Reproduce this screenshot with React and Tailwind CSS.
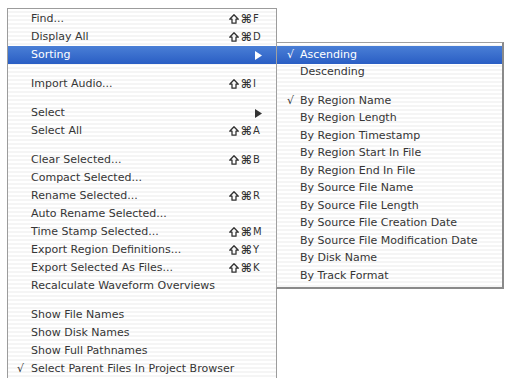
import React from "react";

const stripes =
  "bg-[repeating-linear-gradient(to_bottom,#ffffff_0px,#ffffff_2px,#f5f5f5_2px,#f5f5f5_4px)]";

const mainItems = [
  { t: "Find...", k: "F" },
  { t: "Display All", k: "D" },
  { t: "Sorting", sub: true, hl: true },
  { sep: true },
  { t: "Import Audio...", k: "I" },
  { sep: true },
  { t: "Select", sub: true },
  { t: "Select All", k: "A" },
  { sep: true },
  { t: "Clear Selected...", k: "B" },
  { t: "Compact Selected..." },
  { t: "Rename Selected...", k: "R" },
  { t: "Auto Rename Selected..." },
  { t: "Time Stamp Selected...", k: "M" },
  { t: "Export Region Definitions...", k: "Y" },
  { t: "Export Selected As Files...", k: "K" },
  { t: "Recalculate Waveform Overviews" },
  { sep: true },
  { t: "Show File Names" },
  { t: "Show Disk Names" },
  { t: "Show Full Pathnames" },
  { t: "Select Parent Files In Project Browser", check: true },
];

const subItems = [
  { t: "Ascending", check: true, hl: true },
  { t: "Descending" },
  { sep: true },
  { t: "By Region Name", check: true },
  { t: "By Region Length" },
  { t: "By Region Timestamp" },
  { t: "By Region Start In File" },
  { t: "By Region End In File" },
  { t: "By Source File Name" },
  { t: "By Source File Length" },
  { t: "By Source File Creation Date" },
  { t: "By Source File Modification Date" },
  { t: "By Disk Name" },
  { t: "By Track Format" },
];

function ShiftIcon() {
  return (
    <svg width="10" height="10" viewBox="0 0 10 10" className="mr-[2px]">
      <path
        d="M5 0.8 L9.3 5.2 L7 5.2 L7 9.2 L3 9.2 L3 5.2 L0.7 5.2 Z"
        fill="none"
        stroke="#333333"
        strokeWidth="1.3"
        strokeLinejoin="round"
      />
    </svg>
  );
}

function MainRow({ it }) {
  if (it.sep) return <div className="h-[11px]" />;
  const hl = it.hl;
  return (
    <div
      className={
        "flex h-[18px] items-center pl-[9px] pr-[13px] text-[11px] " +
        (hl
          ? "bg-[linear-gradient(to_bottom,#4a7fd6,#2a5ec4)] text-white"
          : "text-[#363636]")
      }
    >
      <span className="w-[14px] shrink-0 text-[11px]">{it.check ? "√" : ""}</span>
      <span className="flex-1 whitespace-nowrap">{it.t}</span>
      {it.k && (
        <span className="flex items-center text-[#333]">
          <ShiftIcon />
          <span className="text-[12px] font-bold leading-none">⌘</span>
          <span className="ml-[1px] w-[10px] text-[10px] leading-none">{it.k}</span>
        </span>
      )}
      {it.sub && (
        <svg width="7" height="9" viewBox="0 0 7 9" className="mr-[1px]">
          <path d="M0 0 L7 4.5 L0 9 Z" fill={hl ? "#ffffff" : "#333333"} />
        </svg>
      )}
    </div>
  );
}

function SubRow({ it }) {
  if (it.sep) return <div className="h-[11px]" />;
  const hl = it.hl;
  return (
    <div
      className={
        "flex h-[17.5px] items-center pl-[10px] pr-[8px] text-[11px] " +
        (hl
          ? "bg-[linear-gradient(to_bottom,#4a7fd6,#2a5ec4)] text-white"
          : "text-[#363636]")
      }
    >
      <span className="w-[13px] shrink-0">{it.check ? "√" : ""}</span>
      <span className="whitespace-nowrap">{it.t}</span>
    </div>
  );
}

export default function App() {
  return (
    <div className="relative h-[378px] w-[506px] overflow-hidden bg-white pl-[7px] pt-[8px] font-['DejaVu_Sans',sans-serif]">
      <div
        className={
          "h-[400px] w-[270px] border border-[#9c9c9c] pt-px " + stripes
        }
      >
        {mainItems.map((it, i) => (
          <MainRow key={i} it={it} />
        ))}
      </div>
      <div
        className={
          "absolute left-[276px] top-[42px] w-[228px] border border-[#a0a0a0] border-b-2 border-r-2 border-b-[#8a8a8a] border-r-[#8a8a8a] pb-[2px] pt-[3px] " +
          stripes
        }
      >
        {subItems.map((it, i) => (
          <SubRow key={i} it={it} />
        ))}
      </div>
    </div>
  );
}
